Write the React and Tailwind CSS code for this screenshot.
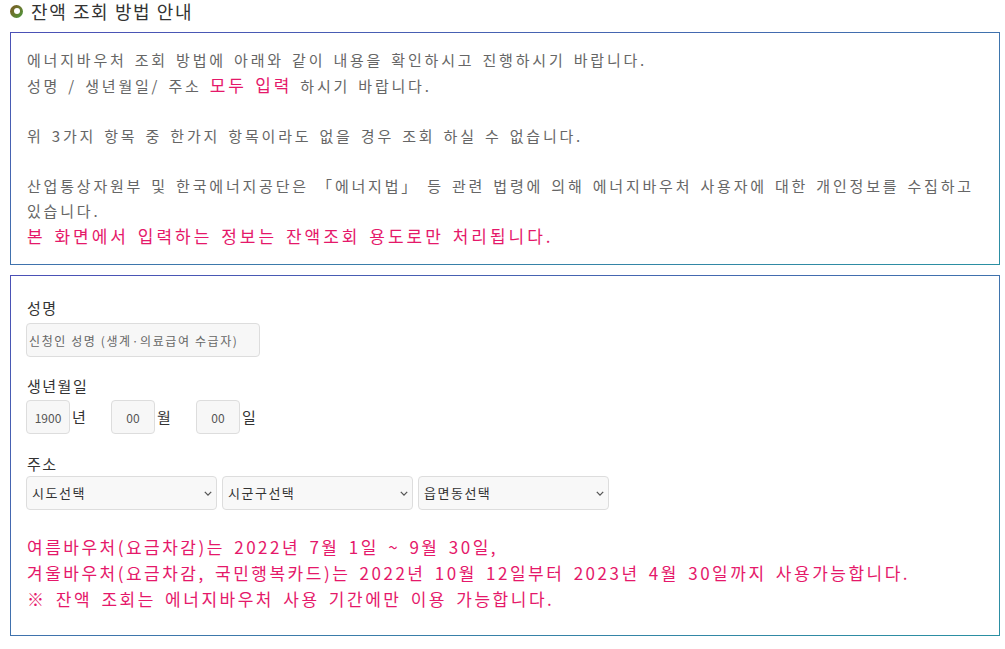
const pink = "text-[#e5186a]";

function Box({ className, children }) {
  return (
    <div className="ml-[10px] w-[990px] p-px bg-linear-to-br from-[#4b50b6] to-[#2a90a2]">
      <div className={`bg-white ${className}`}>{children}</div>
    </div>
  );
}

function Label({ className = "", children }) {
  return (
    <div className={`text-[15px] leading-[22px] text-[#333] tracking-[1.5px] ${className}`}>
      {children}
    </div>
  );
}

function DateField({ value, unit }) {
  return (
    <div className="flex w-[85px] items-center">
      <input
        defaultValue={value}
        className="h-[34px] w-[44px] rounded border border-[#ddd] bg-[#f7f7f7] text-center text-[12px] text-[#555] outline-none"
      />
      <span className="ml-[2px] text-[15px] text-[#333]">{unit}</span>
    </div>
  );
}

function Select({ label }) {
  return (
    <div className="relative w-[191px]">
      <select className="h-[34px] w-full appearance-none rounded border border-[#ddd] bg-[#f8f8f8] pl-[5px] text-[13px] font-normal tracking-[1.5px] text-[#333] outline-none">
        <option>{label}</option>
      </select>
      {/* chevron */}
      <svg
        viewBox="0 0 10 6"
        className="pointer-events-none absolute right-[5px] top-[15px] h-[5px] w-[8px]"
      >
        <path d="M1 1l4 4 4-4" fill="none" stroke="#555" strokeWidth="1.6" />
      </svg>
    </div>
  );
}

export default function App() {
  return (
    <div className="min-h-screen bg-white font-['Noto_Sans_CJK_KR','Noto_Sans',sans-serif] text-[#666]">
      <h2 className="mb-[10px] flex h-[22px] items-center gap-[8px] pl-[10px] text-[18px] font-normal leading-[22px] tracking-[1.6px] text-[#333]">
        <span className="flex h-[13px] w-[13px] items-center justify-center rounded-full bg-linear-to-br from-[#7a5622] to-[#3d9a3c]">
          <span className="h-[6px] w-[6px] rounded-full bg-white" />
        </span>
        잔액 조회 방법 안내
      </h2>

      <Box className="px-4 pb-[16px] pt-[14px] text-[15px] leading-[25px] tracking-[2.8px] [word-spacing:2px]">
        <p>에너지바우처 조회 방법에 아래와 같이 내용을 확인하시고 진행하시기 바랍니다.</p>
        <p>
          성명 / 생년월일/ 주소 <span className={`text-[17px] ${pink}`}>모두 입력</span> 하시기
          바랍니다.
        </p>
        <p className="h-[25px]" />
        <p>위 3가지 항목 중 한가지 항목이라도 없을 경우 조회 하실 수 없습니다.</p>
        <p className="h-[25px]" />
        <p>
          산업통상자원부 및 한국에너지공단은 「에너지법」 등 관련 법령에 의해 에너지바우처
          사용자에 대한 개인정보를 수집하고
          <br />
          있습니다.
        </p>
        <p className={`text-[17px] tracking-[3px] ${pink}`}>
          본 화면에서 입력하는 정보는 잔액조회 용도로만 처리됩니다.
        </p>
      </Box>

      <div className="h-[10px]" />

      <Box className="px-4 pb-[23px] pt-[21px]">
        <Label className="mb-[4px]">성명</Label>
        <input
          placeholder="신청인 성명 (생계·의료급여 수급자)"
          className="-ml-px h-[34px] w-[234px] rounded border border-[#ddd] bg-[#f7f7f7] px-[2px] text-[12px] tracking-[1.6px] text-[#333] outline-none placeholder:text-[#666]"
        />

        <Label className="mb-[3px] mt-[18px]">생년월일</Label>
        <div className="-ml-px flex">
          <DateField value="1900" unit="년" />
          <DateField value="00" unit="월" />
          <DateField value="00" unit="일" />
        </div>

        <Label className="mb-[1px] mt-[19px]">주소</Label>
        <div className="-ml-px flex gap-[5px]">
          <Select label="시도선택" />
          <Select label="시군구선택" />
          <Select label="읍면동선택" />
        </div>

        <div className={`mt-[24px] text-[17px] leading-[26px] tracking-[2.5px] [word-spacing:3px] ${pink}`}>
          <p>여름바우처(요금차감)는 2022년 7월 1일 ~ 9월 30일,</p>
          <p>겨울바우처(요금차감, 국민행복카드)는 2022년 10월 12일부터 2023년 4월 30일까지 사용가능합니다.</p>
          <p>※ 잔액 조회는 에너지바우처 사용 기간에만 이용 가능합니다.</p>
        </div>
      </Box>
    </div>
  );
}
